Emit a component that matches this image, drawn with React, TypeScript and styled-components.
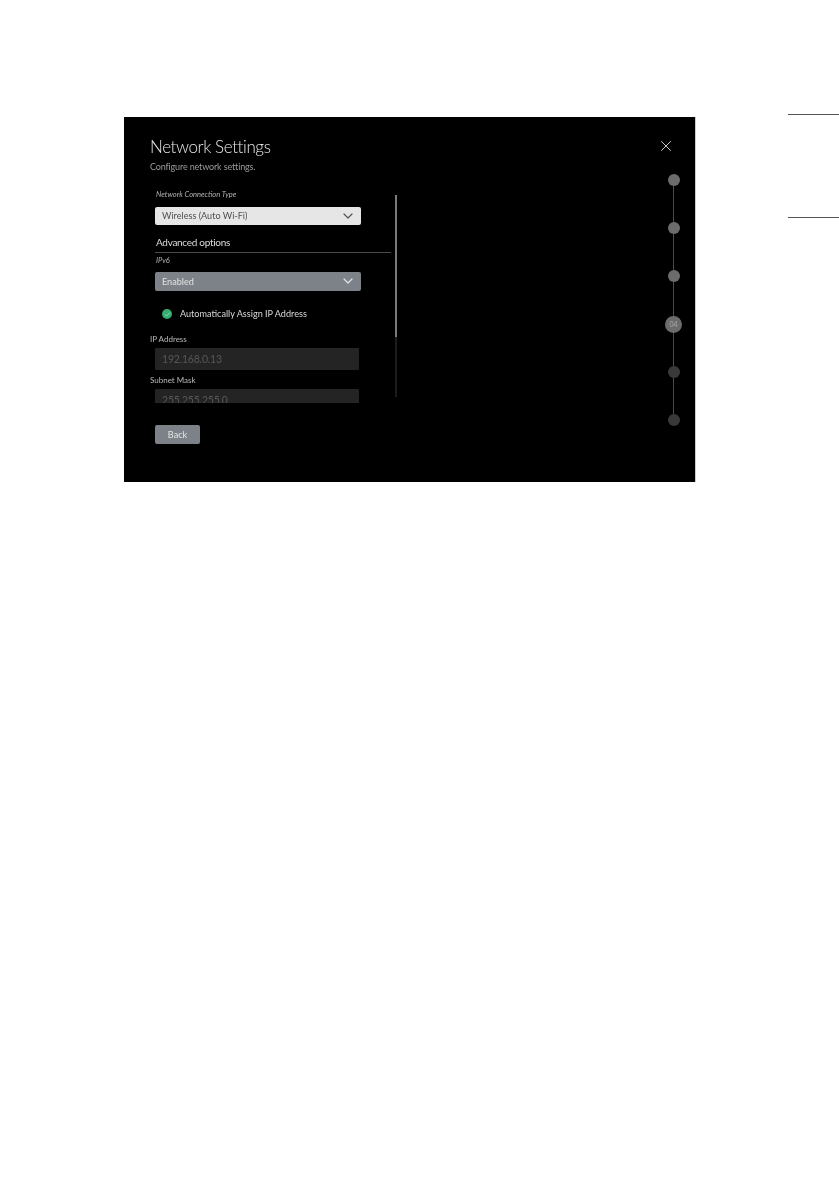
import React from 'react';
import styled, { createGlobalStyle } from 'styled-components';
import { Check, ChevronDown, X } from 'lucide-react';

const GlobalStyle = createGlobalStyle`
  html, body {
    margin: 0;
    padding: 0;
    background: #fff;
  }
  body {
    font-family: Lato, "Open Sans", "Liberation Sans", sans-serif;
  }
`;

const Page = styled.div`
  width: 839px;
  height: 1191px;
  display: flex;
  align-items: flex-start;
  padding: 114px 0 0 124px;
  box-sizing: border-box;
  overflow: hidden;
`;

const Panel = styled.div`
  width: 572px;
  height: 365px;
  margin-top: 3px;
  flex: none;
  background: #000;
  display: flex;
  box-sizing: border-box;
  border-right: 1px solid #ccc;
`;

const Main = styled.div`
  width: 528px;
  flex: none;
  padding: 18px 0 0 26px;
  box-sizing: border-box;
  will-change: transform;
`;

const Title = styled.h1`
  margin: 0;
  font-size: 17px;
  line-height: 24px;
  letter-spacing: -0.4px;
  font-weight: 300;
  color: #e6e6e6;
`;

const Subtitle = styled.p`
  margin: 1px 0 0;
  font-size: 9px;
  line-height: 14px;
  letter-spacing: -0.15px;
  color: #9a9a9a;
`;

const Body = styled.div`
  display: flex;
  margin-top: 16px;
  height: 213px;
`;

const Form = styled.div`
  width: 242px;
  height: 213px;
  overflow: hidden;
  flex: none;
`;

const Indented = styled.div`
  padding-left: 5px;
`;

const FieldLabel = styled.div`
  padding-left: 1px;
  font-size: 7.5px;
  line-height: 10px;
  font-style: italic;
  color: #b4b4b4;
`;

const SubFieldLabel = styled(FieldLabel)`
  margin-top: 3px;
`;

const Select = styled.div<{ $light?: boolean }>`
  width: 206px;
  height: 18.5px;
  margin-top: 6.5px;
  padding: 0 5px 0 7px;
  box-sizing: border-box;
  display: flex;
  align-items: center;
  justify-content: space-between;
  border-radius: 2px;
  background: ${p => (p.$light ? '#e6e6e6' : '#7d8289')};
  color: ${p => (p.$light ? '#4f4f4f' : '#e2e2e2')};
  font-size: 9.1px;
`;

const SectionTitle = styled.h2`
  margin: 9.5px 0 0;
  padding: 0 0 3px 1px;
  box-sizing: content-box;
  font-size: 10px;
  line-height: 14px;
  letter-spacing: -0.3px;
  font-weight: 400;
  color: #dcdcdc;
  border-bottom: 1px solid #4c4c4c;
  width: 235px;
`;

const CheckRow = styled.div`
  display: flex;
  align-items: center;
  gap: 8px;
  margin: 17.5px 0 0 7px;
  font-size: 9.1px;
  line-height: 12px;
  color: #d8d8d8;
`;

const CheckDot = styled.span`
  width: 10px;
  height: 10px;
  border-radius: 50%;
  background: #36ad70;
  display: flex;
  align-items: center;
  justify-content: center;
  color: #dff5e8;
`;

const InputLabel = styled.div`
  margin-top: 13.5px;
  font-size: 8px;
  line-height: 11px;
  color: #b8b8b8;
`;

const Input = styled.div`
  margin: 3.5px 0 0 5px;
  width: 204px;
  height: 22px;
  padding: 0 7px;
  box-sizing: border-box;
  display: flex;
  align-items: center;
  border-radius: 1px;
  background: #242424;
  color: #575757;
  font-size: 10.5px;
  letter-spacing: -0.2px;
`;

const SubLabel = styled(InputLabel)`
  margin-top: 4.5px;
`;

const Scrollbar = styled.div`
  width: 2px;
  height: 202px;
  margin: 5px 0 0 3px;
  background: #1c1c1c;
`;

const ScrollThumb = styled.div`
  height: 142px;
  background: #7a7a7a;
`;

const BackButton = styled.button`
  display: block;
  width: 45px;
  height: 18.5px;
  margin: 22px 0 0 5px;
  padding: 0;
  border: 0;
  border-radius: 2px;
  background: #7d8289;
  color: #e6e6e6;
  font: inherit;
  font-size: 9.1px;
`;

const Side = styled.div`
  flex: 1;
  display: flex;
  flex-direction: column;
  align-items: center;
  padding-top: 19px;
  will-change: transform;
`;

const CloseButton = styled.div`
  width: 20px;
  height: 20px;
  margin-left: -16px;
  color: #e0e0e0;
  display: flex;
  align-items: center;
  justify-content: center;
`;

const Stepper = styled.div`
  position: relative;
  display: flex;
  flex-direction: column;
  align-items: center;
  gap: 36px;
  margin-top: 18px;
  &::before {
    content: '';
    position: absolute;
    top: 6px;
    bottom: 6px;
    left: 50%;
    width: 1px;
    margin-left: -0.5px;
    background: #4a4a4a;
  }
`;

const Step = styled.div<{ $state: 'done' | 'current' | 'todo' }>`
  position: relative;
  width: ${p => (p.$state === 'current' ? 17 : 12)}px;
  height: ${p => (p.$state === 'current' ? 17 : 12)}px;
  margin: ${p => (p.$state === 'current' ? '-2.5px 0' : '0')};
  border-radius: 50%;
  background: ${p => (p.$state === 'todo' ? '#393939' : '#6c6c6c')};
  color: #a8a8a8;
  font-size: 7px;
  display: flex;
  align-items: center;
  justify-content: center;
`;

const SideTab = styled.div`
  width: 51px;
  height: 104px;
  margin-left: 92px;
  flex: none;
  box-sizing: border-box;
  border-top: 1px solid #555;
  border-bottom: 1px solid #555;
`;

const steps: Array<'done' | 'current' | 'todo'> = ['done', 'done', 'done', 'current', 'todo', 'todo'];

export default function App() {
  return (
    <Page>
      <GlobalStyle />
      <Panel>
        <Main>
          <Title>Network Settings</Title>
          <Subtitle>Configure network settings.</Subtitle>
          <Body>
            <Form>
              <Indented>
                <FieldLabel>Network Connection Type</FieldLabel>
                <Select $light>
                  Wireless (Auto Wi-Fi)
                  <ChevronDown size={16} strokeWidth={1.8} color="#555" />
                </Select>
                <SectionTitle>Advanced options</SectionTitle>
                <SubFieldLabel>IPv6</SubFieldLabel>
                <Select>
                  Enabled
                  <ChevronDown size={16} strokeWidth={1.8} color="#e2e2e2" />
                </Select>
                <CheckRow>
                  <CheckDot><Check size={7} strokeWidth={2} /></CheckDot>
                  Automatically Assign IP Address
                </CheckRow>
              </Indented>
              <InputLabel>IP Address</InputLabel>
              <Input>192.168.0.13</Input>
              <SubLabel>Subnet Mask</SubLabel>
              <Input>255.255.255.0</Input>
            </Form>
            <Scrollbar><ScrollThumb /></Scrollbar>
          </Body>
          <BackButton>Back</BackButton>
        </Main>
        <Side>
          <CloseButton><X size={18} strokeWidth={1.2} /></CloseButton>
          <Stepper>
            {steps.map((s, i) => (
              <Step key={i} $state={s}>{s === 'current' ? '04' : null}</Step>
            ))}
          </Stepper>
        </Side>
      </Panel>
      <SideTab />
    </Page>
  );
}
